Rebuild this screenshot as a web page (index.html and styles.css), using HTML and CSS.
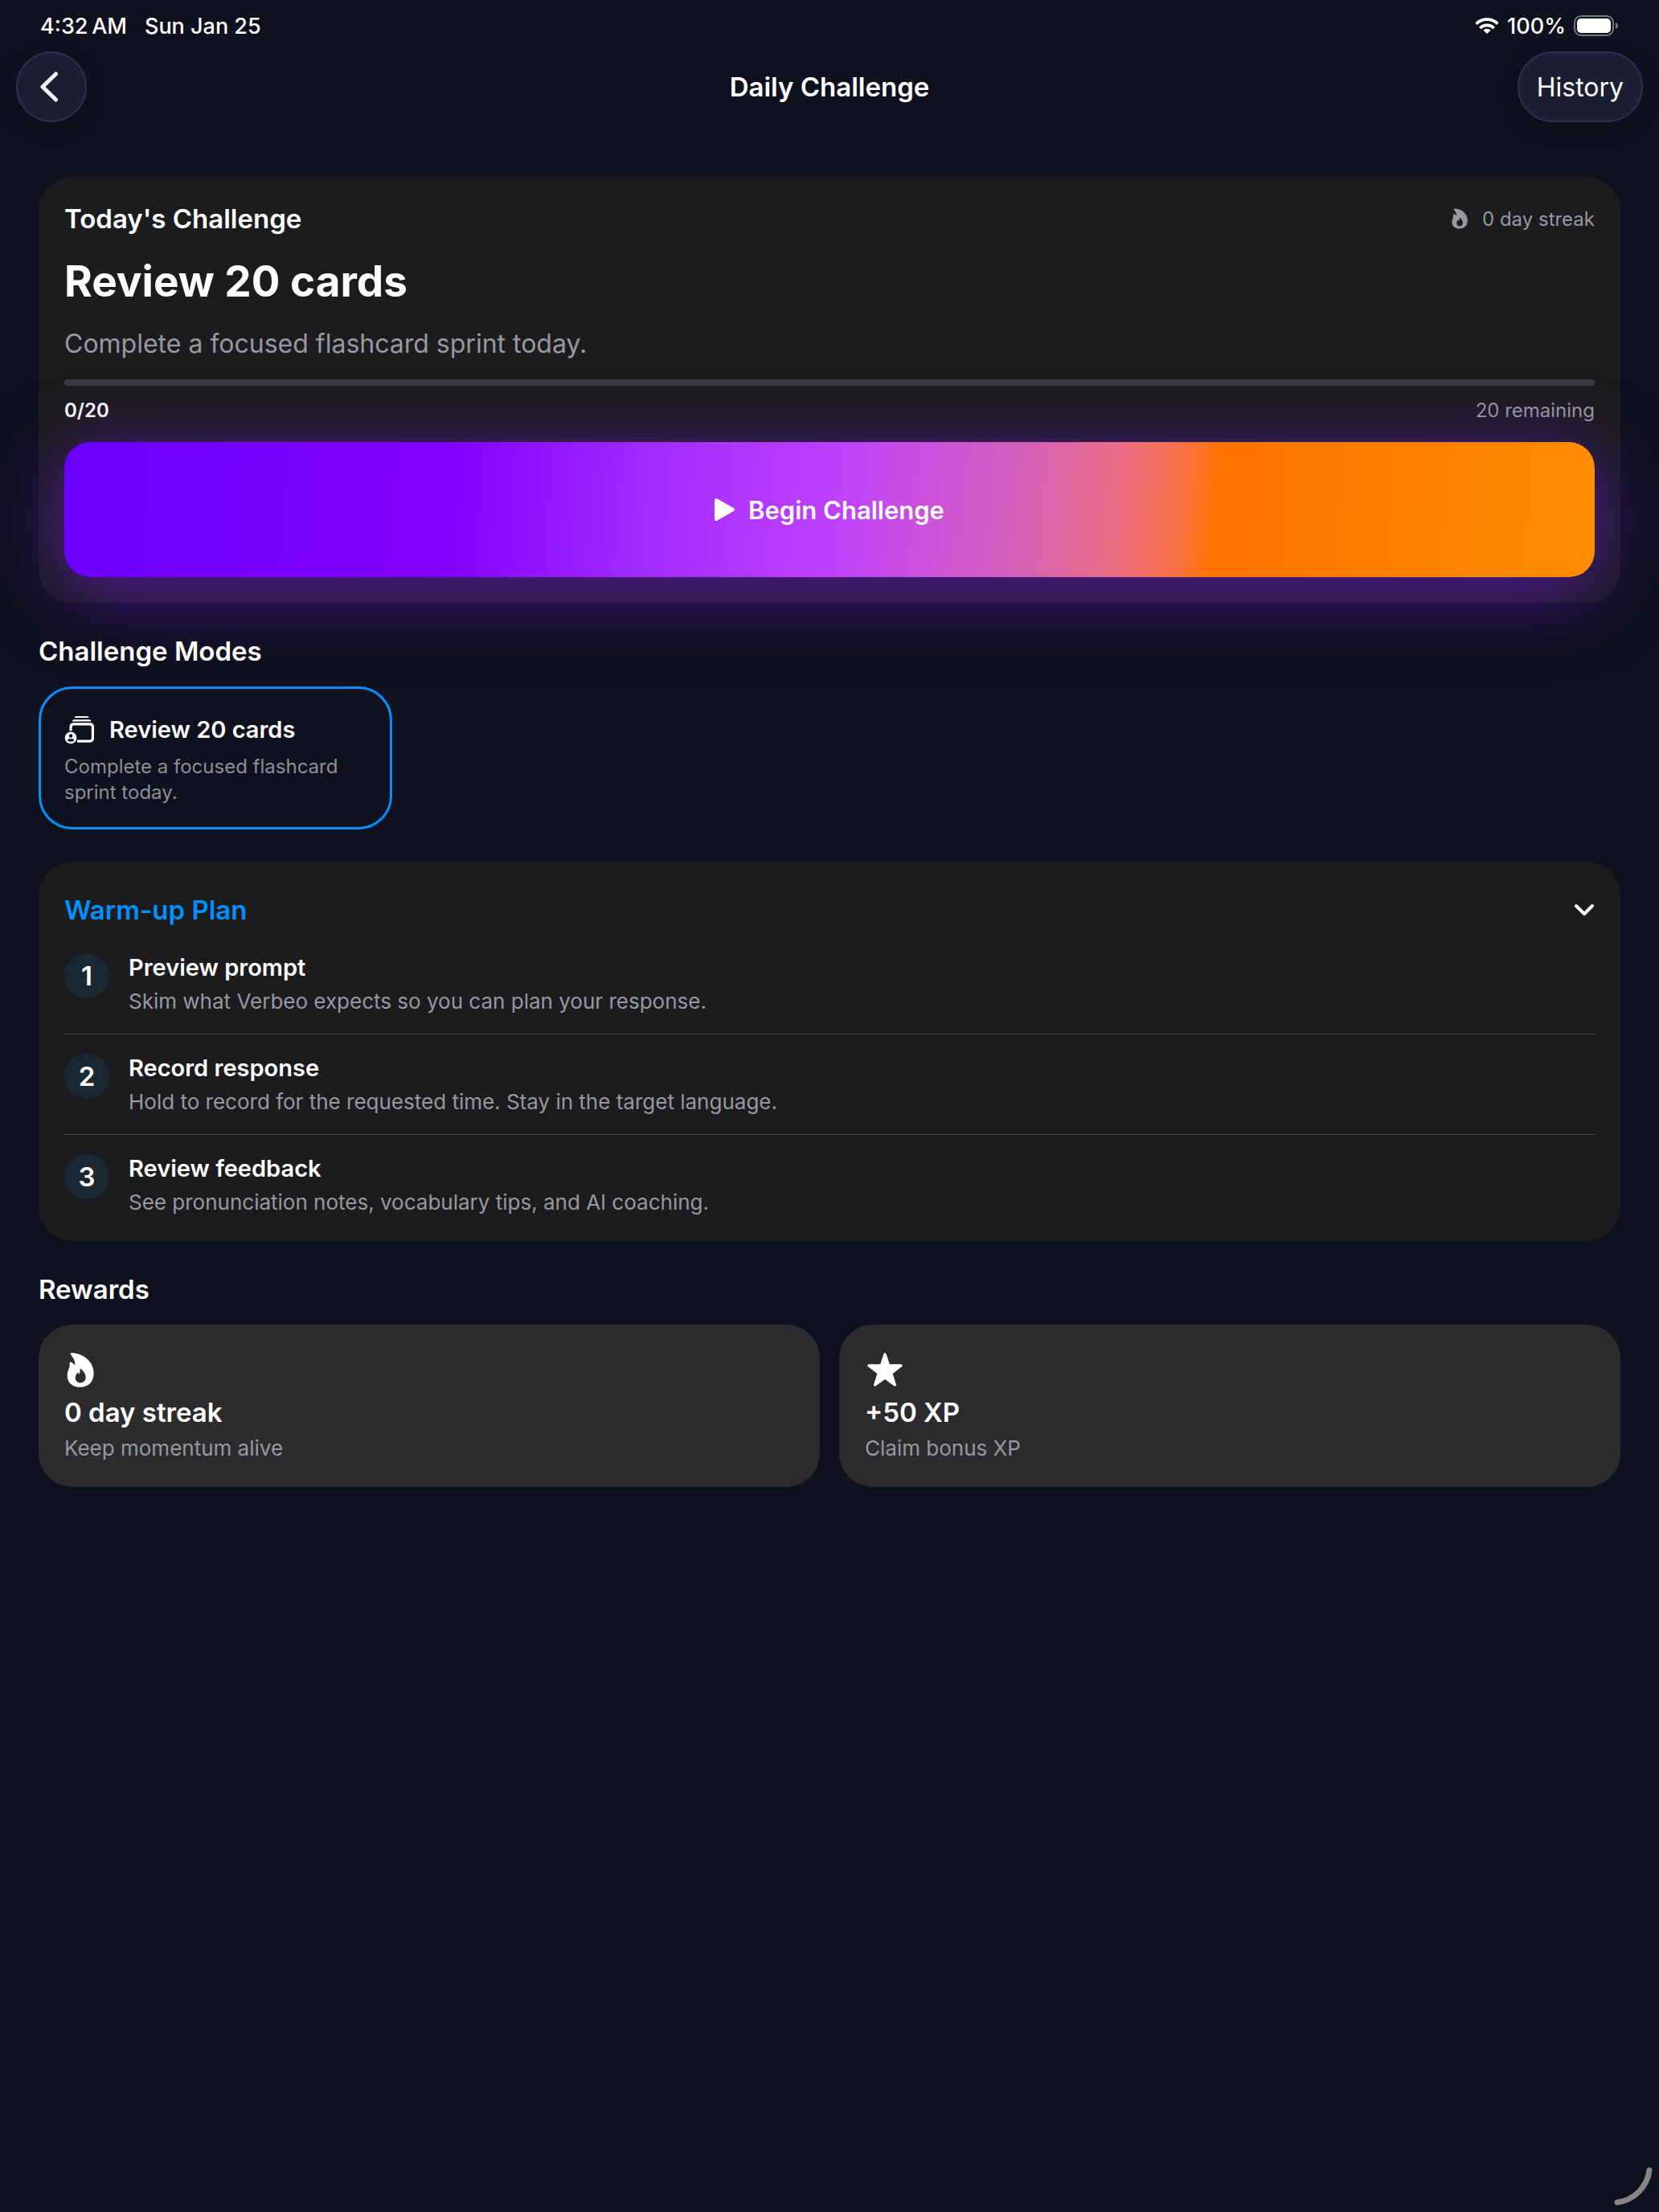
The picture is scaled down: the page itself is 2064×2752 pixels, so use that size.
FILE: index.html
```html
<!DOCTYPE html>
<html lang="en">
<head>
    <meta charset="UTF-8">
    <meta name="viewport" content="width=device-width, initial-scale=1.0">
    <title>Daily Challenge</title>
    <link rel="stylesheet" href="styles.css">
</head>
<body>
    <!-- shared icons -->
    <svg class="icon-defs" aria-hidden="true">
        <symbol id="flame" viewBox="0 0 102 128">
            <path fill="currentColor" fill-rule="evenodd" d="M14 5C13 1 17 0 22 0C62 2 101 32 101 76C101 108 80 128 50 128C20 128 2 110 2 84C2 66 12 58 11 40C11 34 16 33 20 36L31 45C32 30 24 18 14 5ZM50 58C62 66 71 78 71 92C71 104 62 112 51 112C39 112 32 103 32 92C32 84 37 81 38 76C39 72 42 73 44 77L46 79C50 75 50 66 50 58Z"/>
        </symbol>
    </svg>

    <div class="status-bar">
        <div class="status-group status-time">
            <span>4:32&#8201;AM</span>
            <span>Sun Jan 25</span>
        </div>
        <div class="status-group">
            <svg class="wifi-icon" viewBox="0 0 88 60" fill="none" stroke="currentColor" stroke-width="11">
                <path d="M4 23A57 57 0 0 1 84 23"/>
                <path d="M18 39A37 37 0 0 1 70 39"/>
                <path d="M44 60L30 47A20 20 0 0 1 58 47Z" fill="currentColor" stroke="none"/>
            </svg>
            <span>100%</span>
            <svg class="battery-icon" viewBox="0 0 56 26">
                <rect x="1" y="1" width="48" height="24" rx="8" fill="none" stroke="#747580" stroke-width="2"/>
                <rect x="4" y="4" width="42" height="18" rx="5" fill="#fff"/>
                <path d="M52 9Q55 10 55 13Q55 16 52 17Z" fill="#747580"/>
            </svg>
        </div>
    </div>

    <header class="nav-bar">
        <button class="nav-button nav-back" aria-label="Back">
            <svg class="back-icon" viewBox="0 0 22 38" fill="none" stroke="#f2f2ff" stroke-width="5" stroke-linecap="round" stroke-linejoin="round">
                <path d="M19.500 3L3 19L19.500 35"/>
            </svg>
        </button>
        <h1 class="nav-title">Daily Challenge</h1>
        <button class="nav-button nav-history">History</button>
    </header>

    <main class="main-content">
        <section class="card challenge-card">
            <div class="card-row">
                <h2 class="section-title">Today's Challenge</h2>
                <span class="streak"><svg class="streak-icon"><use href="#flame"/></svg>0 day streak</span>
            </div>
            <p class="challenge-name">Review 20 cards</p>
            <p class="challenge-text">Complete a focused flashcard sprint today.</p>
            <progress class="challenge-progress" value="0" max="20" aria-label="Cards reviewed"></progress>
            <div class="card-row progress-row">
                <span class="progress-count">0/20</span>
                <span>20 remaining</span>
            </div>
            <button class="begin-button">
                <svg class="play-icon" viewBox="0 0 26 28" fill="currentColor" stroke="currentColor" stroke-width="4" stroke-linejoin="round">
                    <path d="M2 2L23 14L2 26Z"/>
                </svg>
                Begin Challenge
            </button>
        </section>

        <section class="group">
            <h2 class="section-title">Challenge Modes</h2>
            <button class="mode-card">
                <span class="mode-head">
                    <svg class="mode-icon" viewBox="0 0 118 112">
                        <path fill="currentColor" d="M39 9Q41 3 46 3H88Q94 3 96 9ZM30 23Q32 16 37 16H97Q102 16 104 23Z"/>
                        <path fill="none" stroke="currentColor" stroke-width="10" stroke-linecap="butt" d="M25 60V46Q25 34 37 34H98Q110 34 110 46V88Q110 100 98 100H50"/>
                        <path fill="currentColor" fill-rule="evenodd" d="M25 64A23 23 0 1 1 25 110A23 23 0 1 1 25 64ZM25 72A7 7 0 1 0 25 86A7 7 0 1 0 25 72ZM12 96Q14 102 25 102Q36 102 38 96Q36 90 25 90Q14 90 12 96Z"/>
                    </svg>
                    <span class="item-title">Review 20 cards</span>
                </span>
                <span class="mode-text">Complete a focused flashcard sprint today.</span>
            </button>
        </section>

        <details class="card plan-card" open>
            <summary class="plan-header">
                <span class="section-title plan-title">Warm-up Plan</span>
                <svg class="chevron-icon" viewBox="0 0 26 16" fill="none" stroke="currentColor" stroke-width="4" stroke-linecap="round" stroke-linejoin="round">
                    <path d="M3 3L13 13L23 3"/>
                </svg>
            </summary>
            <ol class="steps">
                <li class="step">
                    <span class="step-number">1</span>
                    <div class="step-body">
                        <h3 class="item-title">Preview prompt</h3>
                        <p class="item-text">Skim what Verbeo expects so you can plan your response.</p>
                    </div>
                </li>
                <li class="step">
                    <span class="step-number">2</span>
                    <div class="step-body">
                        <h3 class="item-title">Record response</h3>
                        <p class="item-text">Hold to record for the requested time. Stay in the target language.</p>
                    </div>
                </li>
                <li class="step">
                    <span class="step-number">3</span>
                    <div class="step-body">
                        <h3 class="item-title">Review feedback</h3>
                        <p class="item-text">See pronunciation notes, vocabulary tips, and AI coaching.</p>
                    </div>
                </li>
            </ol>
        </details>

        <section class="group">
            <h2 class="section-title">Rewards</h2>
            <div class="rewards-grid">
                <div class="card reward-card">
                    <div class="reward-icon">
                        <svg class="reward-flame"><use href="#flame"/></svg>
                    </div>
                    <h3 class="section-title">0 day streak</h3>
                    <p class="item-text">Keep momentum alive</p>
                </div>
                <div class="card reward-card">
                    <div class="reward-icon">
                        <svg class="reward-star" viewBox="0 0 132 126" fill="currentColor" stroke="currentColor" stroke-width="10" stroke-linejoin="round">
                            <path d="M66 6L80 48H126L89 76L103 120L66 93L29 120L43 76L6 48H52Z"/>
                        </svg>
                    </div>
                    <h3 class="section-title">+50 XP</h3>
                    <p class="item-text">Claim bonus XP</p>
                </div>
            </div>
        </section>
    </main>

    <svg class="corner-handle" viewBox="0 0 48 50" fill="none" stroke="#868686" stroke-width="7" stroke-linecap="round" aria-hidden="true">
        <path d="M44 4A46 46 0 0 1 4 44"/>
    </svg>
</body>
</html>
```
FILE: styles.css
```css
* {
    margin: 0;
    padding: 0;
    box-sizing: border-box;
}

body {
    min-height: 100vh;
    font-family: Inter, "Liberation Sans", sans-serif;
    color: white;
    background-color: #0f111e;
}

button {
    font-family: inherit;
    color: inherit;
    border: none;
    background: none;
    cursor: pointer;
}

svg {
    display: block;
    flex-shrink: 0;
}

.icon-defs {
    display: none;
}

/* status bar */
.status-bar {
    display: flex;
    justify-content: space-between;
    align-items: center;
    height: 64px;
    padding: 0 50px;
    font-size: 27px;
    font-weight: 500;
}

.status-group {
    display: flex;
    align-items: center;
    gap: 10px;
}

.status-time {
    gap: 22px;
}

.wifi-icon {
    width: 30px;
    height: 20px;
}

.battery-icon {
    width: 56px;
    height: 26px;
}

/* navigation */
.nav-bar {
    display: grid;
    grid-template-columns: 1fr auto 1fr;
    align-items: center;
    padding: 0 20px;
}

.nav-button {
    display: flex;
    align-items: center;
    justify-content: center;
    height: 88px;
    border: 2px solid #2f3058;
    border-radius: 44px;
    background-color: #1e1e32;
    box-shadow: 0 8px 24px rgba(0, 0, 0, 0.1);
}

.nav-back {
    width: 88px;
    padding-right: 6px;
}

.nav-history {
    justify-self: end;
    padding: 0 22px;
    font-size: 32px;
}

.back-icon {
    width: 22px;
    height: 38px;
}

.nav-title {
    font-size: 33px;
    font-weight: 600;
    line-height: 40px;
}

/* content */
.main-content {
    display: flex;
    flex-direction: column;
    gap: 40px;
    padding: 68px 48px;
}

.card {
    padding: 32px;
    border-radius: 42px;
    background-color: #1c1c1e;
}

.group {
    display: flex;
    flex-direction: column;
    gap: 24px;
}

.section-title {
    font-size: 33px;
    font-weight: 600;
    line-height: 40px;
}

.item-title {
    font-size: 29px;
    font-weight: 600;
    line-height: 36px;
}

.item-text {
    font-size: 26px;
    line-height: 32px;
    color: #98989f;
}

/* today's challenge */
.challenge-card {
    display: flex;
    flex-direction: column;
    gap: 24px;
}

.card-row {
    display: flex;
    justify-content: space-between;
    align-items: center;
}

.streak {
    display: flex;
    align-items: center;
    gap: 18px;
    font-size: 24px;
    color: #98989f;
}

.streak-icon {
    width: 20px;
    height: 26px;
}

.challenge-name {
    font-size: 53px;
    font-weight: 700;
    line-height: 68px;
}

.challenge-text {
    font-size: 32px;
    line-height: 40px;
    color: #98989f;
}

.challenge-progress {
    display: block;
    width: 100%;
    height: 8px;
    border: none;
    border-radius: 4px;
    overflow: hidden;
    appearance: none;
    background-color: #3d3c41;
}

.challenge-progress::-webkit-progress-bar {
    background-color: #3d3c41;
}

.challenge-progress::-webkit-progress-value {
    background-color: #0091ff;
}

.progress-row {
    margin-top: -8px;
    font-size: 24px;
    line-height: 30px;
    color: #98989f;
}

.progress-count {
    font-weight: 600;
    color: white;
}

.begin-button {
    display: flex;
    align-items: center;
    justify-content: center;
    gap: 16px;
    height: 168px;
    border-radius: 32px;
    font-size: 31px;
    font-weight: 600;
    background: linear-gradient(95deg, #6a00ff, #8400ff 25%, #a22bff 38%, #bf40ff 50%, #d460bc 62%, #ec6d80 69%, #fb7240 73%, #ff7300 75%, #ff8c00);
    box-shadow: 0 16px 92px rgba(128, 24, 255, 0.6);
}

.play-icon {
    width: 26px;
    height: 28px;
}

/* modes */
.mode-card {
    display: flex;
    flex-direction: column;
    gap: 10px;
    width: 440px;
    padding: 31px 29px 27px;
    border: 3px solid #0091ff;
    border-radius: 42px;
    text-align: left;
}

.mode-head {
    display: flex;
    align-items: center;
    gap: 18px;
    height: 40px;
}

.mode-icon {
    width: 38px;
    height: 36px;
}

.mode-text {
    font-size: 24px;
    line-height: 32px;
    color: #8e8e98;
}

/* warm-up plan */
.plan-header {
    display: flex;
    justify-content: space-between;
    align-items: center;
    padding: 8px 0 10px;
    list-style: none;
    cursor: pointer;
}

.plan-title {
    color: #0091ff;
}

.chevron-icon {
    width: 26px;
    height: 16px;
}

.steps {
    list-style: none;
}

.step {
    display: flex;
    gap: 24px;
    padding: 24px 0;
}

.step:last-child {
    padding-bottom: 0;
}

.step + .step {
    border-top: 1px solid #414144;
}

.step-number {
    width: 56px;
    height: 56px;
    border-radius: 50%;
    font-size: 33px;
    font-weight: 600;
    line-height: 56px;
    text-align: center;
    background-color: #1a2834;
}

.step-body {
    display: flex;
    flex-direction: column;
    gap: 8px;
}

/* rewards */
.rewards-grid {
    display: grid;
    grid-template-columns: 1fr 1fr;
    gap: 24px;
}

.reward-card {
    display: flex;
    flex-direction: column;
    gap: 9px;
    background-color: #2c2c2e;
}

.reward-icon {
    display: flex;
    align-items: center;
    height: 48px;
    padding-left: 3px;
}

.reward-flame {
    width: 34px;
    height: 43px;
}

.reward-star {
    width: 44px;
    height: 42px;
}

.corner-handle {
    position: fixed;
    right: 8px;
    bottom: 6px;
    width: 48px;
    height: 50px;
}

@media (max-width: 768px) {
    .rewards-grid {
        grid-template-columns: 1fr;
    }

    .mode-card {
        width: 100%;
    }
}
```
